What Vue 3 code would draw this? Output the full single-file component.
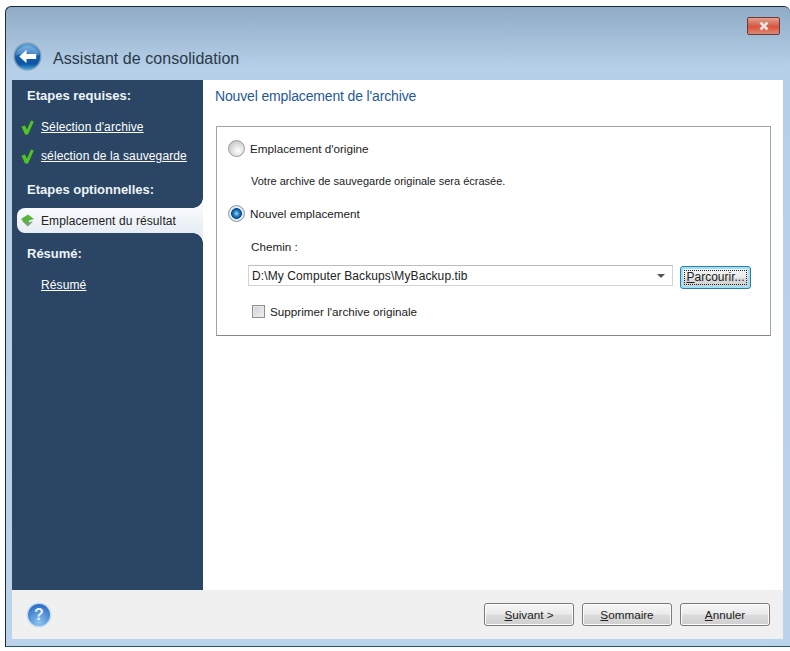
<script setup>
const actions = [
  { key: 'S', rest: 'uivant >' },
  { key: 'S', rest: 'ommaire' },
  { key: 'A', rest: 'nnuler' }
]
</script>

<template>
  <div class="page">
    <div class="window">
      <div class="titlebar">
        <div class="close-row">
          <div class="close">
            <svg width="14" height="10" viewBox="0 0 14 10"><path d="M3.5 1.5 L10.5 8.5 M10.5 1.5 L3.5 8.5" stroke="#e8e4e2" stroke-width="2.8" /></svg>
          </div>
        </div>
        <div class="title-row">
          <svg class="back" width="29" height="29" viewBox="0 0 30 30">
            <defs>
              <linearGradient id="bk" x1="0" y1="0" x2="0" y2="1">
                <stop offset="0" stop-color="#5aa4de" />
                <stop offset="0.5" stop-color="#0f5cae" />
                <stop offset="0.8" stop-color="#0d56a2" />
                <stop offset="1" stop-color="#38a0dc" />
              </linearGradient>
            </defs>
            <circle cx="15" cy="15" r="14.5" fill="#7f9ab4" />
            <circle cx="15" cy="15" r="13" fill="url(#bk)" />
            <path d="M3 14 A12 10 0 0 1 27 14 Q15 10 3 14 Z" fill="#fff" opacity="0.22" />
            <path d="M6.5 15 L14 8 L14 12.3 L24 12.3 L24 17.7 L14 17.7 L14 22 Z" fill="#fff" />
          </svg>
          <span class="title">Assistant de consolidation</span>
        </div>
      </div>
      <div class="client">
        <div class="body">
          <aside class="sidebar">
            <div class="head first">Etapes requises:</div>
            <div class="step">
              <svg class="check" width="13" height="15" viewBox="0 0 13 15"><path d="M0.5 6.5 L4 5.5 L6 9.5 L10 0.5 L12.8 1.5 L7 14.5 L4 14.5 Z" fill="#52c322" /></svg>
              <a class="link">Sélection d'archive</a>
            </div>
            <div class="step">
              <svg class="check" width="13" height="15" viewBox="0 0 13 15"><path d="M0.5 6.5 L4 5.5 L6 9.5 L10 0.5 L12.8 1.5 L7 14.5 L4 14.5 Z" fill="#52c322" /></svg>
              <a class="link">sélection de la sauvegarde</a>
            </div>
            <div class="head opt">Etapes optionnelles:</div>
            <div class="active">
              <svg width="15" height="13" viewBox="0 0 15 13"><path d="M2 7 L6 11 L8 12.5 L13 7.5 L9 8 Z" fill="#8d9c94" /><path d="M1 5 L8 0.5 L14 5 L9 6.5 L8 11 L4 8 Z" fill="#58b53c" /></svg>
              <span>Emplacement du résultat</span>
            </div>
            <div class="head res">Résumé:</div>
            <div class="step last"><a class="link">Résumé</a></div>
          </aside>
          <main class="main">
            <h1 class="heading">Nouvel emplacement de l'archive</h1>
            <section class="box">
              <div class="radio-row">
                <span class="radio"></span>
                <span>Emplacement d'origine</span>
              </div>
              <p class="note">Votre archive de sauvegarde originale sera écrasée.</p>
              <div class="radio-row second">
                <span class="radio on"></span>
                <span>Nouvel emplacement</span>
              </div>
              <p class="note path">Chemin :</p>
              <div class="path-row">
                <div class="combo">
                  <span>D:\My Computer Backups\MyBackup.tib</span>
                  <span class="caret"></span>
                </div>
                <button class="btn browse"><span class="focus"><u>P</u>arcourir...</span></button>
              </div>
              <div class="check-row">
                <span class="checkbox"></span>
                <span>Supprimer l'archive originale</span>
              </div>
            </section>
          </main>
        </div>
        <footer class="footer">
          <svg class="help" width="26" height="26" viewBox="0 0 26 26">
            <defs>
              <radialGradient id="hp" cx="0.5" cy="0.85" r="0.8">
                <stop offset="0" stop-color="#8cc4f2" />
                <stop offset="1" stop-color="#2f70c6" />
              </radialGradient>
            </defs>
            <circle cx="13" cy="13" r="12.5" fill="#c4dcf2" />
            <circle cx="13" cy="13" r="11" fill="url(#hp)" />
            <text x="13" y="18" text-anchor="middle" class="help-q">?</text>
          </svg>
          <div class="actions">
            <button v-for="a in actions" :key="a.rest" class="btn"><u>{{ a.key }}</u>{{ a.rest }}</button>
          </div>
        </footer>
      </div>
    </div>
  </div>
</template>

<style>
html, body { margin: 0; background: #fff; }
</style>

<style scoped>
.page {
  width: 790px;
  height: 651px;
  padding: 6px 0 0 5px;
  box-sizing: border-box;
  font-family: "Liberation Sans", Arial, sans-serif;
  font-size: 11.7px;
  color: #222;
  overflow: hidden;
}
.window {
  height: 641px;
  box-sizing: border-box;
  border: 1px solid #1c2a33;
  border-right: 0;
  border-bottom-color: #245a6a;
  border-radius: 6px 6px 0 0;
  background: linear-gradient(#8fabc6 0, #b6cfe8 60px, #bcd3ec 100%);
  padding: 0 7px 7px 6px;
  display: flex;
  flex-direction: column;
}
.titlebar { height: 73px; flex: none; }
.close-row { display: flex; justify-content: flex-end; height: 35px; padding-right: 3px; }
.close {
  width: 31px;
  height: 16px;
  margin-top: 10px;
  border: 1px solid #6b3a38;
  border-radius: 2px;
  background: linear-gradient(#e6a08e, #d4634e 45%, #e0503a 55%, #d88a78);
  display: flex;
  align-items: center;
  justify-content: center;
}
.title-row { display: flex; align-items: center; gap: 11px; margin-left: 1px; height: 28px; }
.back { flex: none; }
.title { font-size: 16px; letter-spacing: 0.05px; color: #2a3a48; margin-top: 6px; }
.client { flex: 1; display: flex; flex-direction: column; min-height: 0; }
.body { flex: 1; display: flex; min-height: 0; }
.sidebar {
  width: 191px;
  flex: none;
  background: #2a4664;
  color: #fff;
  padding-top: 8px;
  box-sizing: border-box;
}
.head { font-weight: 700; font-size: 13px; padding-left: 15px; height: 15px; line-height: 15px; color: #eef3f8; }
.step { display: flex; align-items: center; height: 14px; padding-left: 9px; margin-top: 15px; gap: 7px; font-size: 12px; letter-spacing: 0.12px; }
.step.last { padding-left: 29px; margin-top: 17px; }
.head.first + .step { margin-top: 17px; }
.head.opt { margin-top: 19px; }
.head.res { margin-top: 13px; }
.check { flex: none; }
.link { color: #fff; text-decoration: underline; }
.active {
  position: relative;
  margin: 11px 0 0 5px;
  height: 25px;
  background: linear-gradient(#f8fafc, #e6edf4);
  border-radius: 8px 0 0 8px;
  color: #222;
  display: flex;
  align-items: center;
  padding-left: 3px;
  gap: 6px;
  font-size: 12px;
  letter-spacing: 0.1px;
}
.active::before, .active::after {
  content: "";
  position: absolute;
  right: 0;
  width: 10px;
  height: 10px;
}
.active::before { top: -10px; background: radial-gradient(circle at 0 0, #2a4664 9.5px, #f8fafc 10px); }
.active::after { bottom: -10px; background: radial-gradient(circle at 0 100%, #2a4664 9.5px, #e6edf4 10px); }
.main { flex: 1; background: #fff; padding: 0 12px 0 13px; min-width: 0; }
.heading { margin: 8px 0 0 -1px; font-size: 14px; font-weight: 400; letter-spacing: -0.15px; color: #1f5a96; height: 17px; line-height: 17px; }
.box {
  margin-top: 21px;
  height: 210px;
  box-sizing: border-box;
  border: 1px solid #a3a3a3;
  padding: 12px 19px 0 11px;
  border-bottom-color: #888;
}
.radio-row { display: flex; align-items: center; gap: 5px; height: 18px; }
.radio-row.second { margin-top: 16px; }
.radio {
  width: 17px;
  height: 17px;
  flex: none;
  box-sizing: border-box;
  border-radius: 50%;
  border: 1px solid #9a9a9a;
  background: radial-gradient(circle at 60% 65%, #fff 0, #d8d8d8 55%, #b4b4b4 100%);
}
.radio.on {
  border-color: #8a99a8;
  background: radial-gradient(circle, #8fd8f6 0, #1467b4 34%, #0d4f96 48%, #e8eef4 54%, #c4cad2 100%);
}
.note { margin: 18px 0 0 23px; font-size: 11px; line-height: 13px; height: 13px; }
.note.path { margin-top: 18px; font-size: 11.7px; }
.path-row { display: flex; align-items: flex-start; margin: 12px 0 0 20px; gap: 7px; }
.combo {
  width: 425px;
  height: 21px;
  flex: none;
  box-sizing: border-box;
  border: 1px solid #d4d4d4;
  border-top-color: #bdbdbd;
  display: flex;
  align-items: center;
  justify-content: space-between;
  padding: 0 7px 0 3px;
  font-size: 12px;
  letter-spacing: 0.1px;
}
.caret { width: 0; height: 0; border: 4px solid transparent; border-top-color: #555; border-bottom: 0; }
.btn {
  font: inherit;
  color: #222;
  width: 90px;
  height: 23px;
  padding: 0;
  box-sizing: border-box;
  border: 1px solid #7a7a7a;
  border-radius: 3px;
  background: linear-gradient(#f6f6f6, #ebebeb 48%, #dcdcdc 52%, #cfcfcf);
  box-shadow: inset 0 0 0 1px #fdfdfd;
}
.btn.browse {
  width: 71px;
  margin-top: 1px;
  border-color: #2c7fa6;
  box-shadow: inset 0 0 0 2px #9ee0f4;
  display: flex;
  padding: 3px;
  font-size: 12px;
}
.focus { flex: 1; border: 1px dotted #222; line-height: 13px; }
.check-row { display: flex; align-items: center; gap: 5px; margin: 15px 0 0 24px; height: 15px; }
.checkbox {
  width: 13px;
  height: 13px;
  box-sizing: border-box;
  border: 1px solid #8e8f8f;
  background: linear-gradient(135deg, #cfcfcf, #f0f0f0);
  box-shadow: inset 0 0 0 1px #e8e8e8;
}
.footer {
  height: 49px;
  flex: none;
  background: #f0f0f0;
  display: flex;
  align-items: center;
  justify-content: space-between;
  padding: 0 13px 0 14px;
}
.help-q { font: 700 16px "Liberation Sans", sans-serif; fill: #e8f2fc; }
.actions { display: flex; gap: 8px; }
</style>
